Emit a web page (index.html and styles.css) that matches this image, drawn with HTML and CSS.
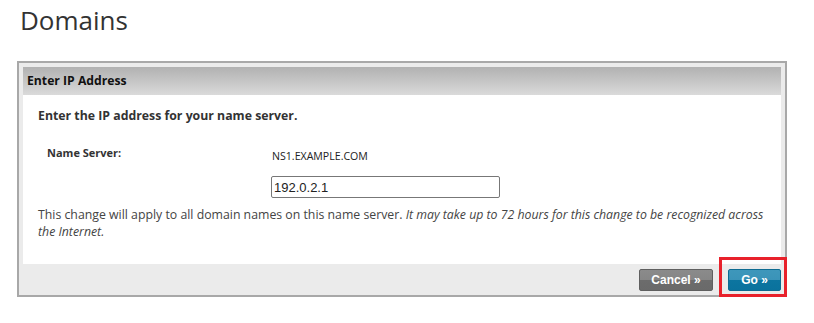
FILE: index.html
```html
<!DOCTYPE html>
<html>
<head>
<meta charset="utf-8">
<link rel="stylesheet" href="styles.css">
</head>
<body>
<h1 class="page-title">Domains</h1>
<div class="panel">
  <div class="panel-header">Enter IP Address</div>
  <div class="panel-body">
    <div class="intro">Enter the IP address for your name server.</div>
    <div class="field-row">
      <div class="field-label">Name Server:</div>
      <div class="field-value">
        <div class="ns-name">NS1.EXAMPLE.COM</div>
        <input class="ip-input" type="text" value="192.0.2.1">
      </div>
    </div>
    <p class="note">This change will apply to all domain names on this name server. <em>It may take up to 72 hours for this change to be recognized across the Internet.</em></p>
  </div>
  <div class="panel-footer">
    <button class="btn btn-cancel">Cancel »</button>
    <span class="highlight"><button class="btn btn-go">Go »</button></span>
  </div>
</div>
</body>
</html>
```
FILE: styles.css
```css
html, body {
  margin: 0;
  padding: 0;
  background: #ffffff;
}
body {
  font-family: "Open Sans", "Liberation Sans", sans-serif;
  color: #333;
}
.page-title {
  margin: 2px 0 23px 20px;
  font-size: 26px;
  line-height: 36px;
  font-weight: 400;
  color: #333;
}
.panel {
  margin-left: 17px;
  border: 2px solid #a8a8a8;
  background: #ebebeb;
  padding: 4px 4px 0 4px;
  box-sizing: content-box;
  width: 758px;
}
.panel-header {
  height: 28px;
  line-height: 28px;
  padding-left: 4px;
  font-size: 12.2px;
  font-weight: 700;
  color: #111;
  background: linear-gradient(#b1b1b1, #dadada);
}
.panel-body {
  background: #fff;
  padding: 12px 15px 16px 15px;
  height: 141px;
}
.intro {
  font-size: 12.3px;
  font-weight: 700;
  line-height: 18px;
  color: #333;
}
.field-row {
  display: flex;
  margin-top: 20px;
}
.field-label {
  width: 224px;
  padding-left: 9px;
  font-size: 11px;
  font-weight: 700;
  line-height: 16px;
  color: #333;
}
.field-value {
  padding-top: 3px;
}
.ns-name {
  font-size: 10.6px;
  line-height: 16px;
  color: #222;
  padding-left: 1px;
}
.ip-input {
  display: block;
  margin-top: 12px;
  width: 229px;
  height: 22px;
  box-sizing: border-box;
  border: 1px solid #777;
  border-radius: 2px;
  padding: 0 2px;
  font-family: "Liberation Sans", Arial, sans-serif;
  font-size: 13px;
  color: #222;
  outline: none;
}
.note {
  margin: 8px 0 0 0;
  font-size: 12.3px;
  line-height: 17px;
  color: #444;
}
.note em {
  font-style: italic;
}
.panel-footer {
  display: flex;
  justify-content: flex-end;
  align-items: center;
  height: 31px;
  gap: 15px;
}
.btn {
  height: 22px;
  border-radius: 2px;
  font-family: "Liberation Sans", Arial, sans-serif;
  font-weight: 700;
  font-size: 12px;
  color: #fff;
  padding: 0;
  cursor: pointer;
}
.btn-cancel {
  width: 74px;
  border: 1px solid #5f5f5f;
  background: linear-gradient(#8b8b8b 0%, #868686 50%, #6c6c6c 50%, #6a6a6a 100%);
}
.btn-go {
  width: 53px;
  border: 1px solid #0d6b91;
  background: linear-gradient(#3e97bb 0%, #3a93b8 50%, #0c75a0 50%, #0a729d 100%);
  display: block;
}
.highlight {
  position: relative;
  display: block;
}
.highlight::after {
  content: "";
  position: absolute;
  left: -9px;
  top: -12px;
  right: -6px;
  bottom: -6px;
  border: 3px solid #e8212b;
  pointer-events: none;
}
```
